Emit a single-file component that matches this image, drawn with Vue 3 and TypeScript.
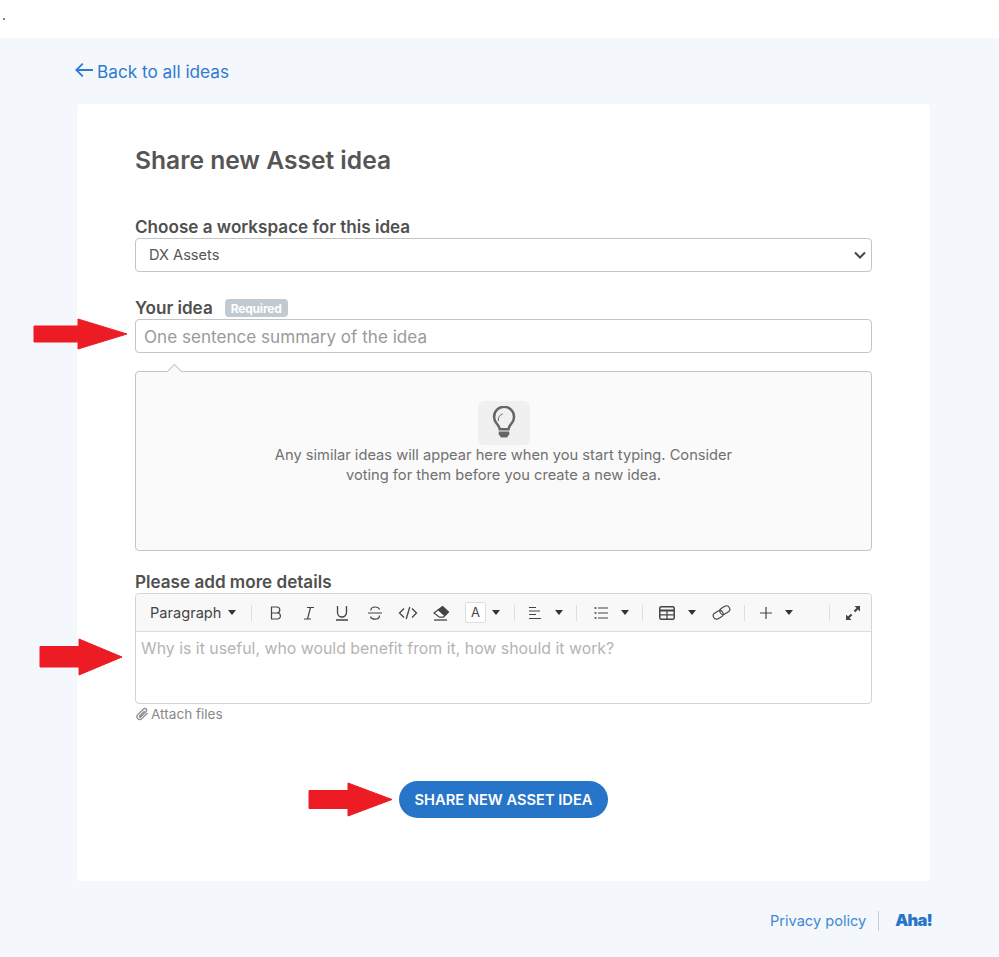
<script setup lang="ts">
const workspaces = ['DX Assets']
</script>

<template>
  <div class="page">
    <div class="topbar">.</div>
    <main class="content">
      <a class="back" href="#">
        <svg class="back-arrow" viewBox="0 0 18 14" width="18" height="14">
          <path d="M18 7H1.500M7.800 .6 1.300 7l6.500 6.400" fill="none" stroke="currentColor" stroke-width="1.800" />
        </svg>
        Back to all ideas
      </a>

      <form class="card" @submit.prevent>
        <h1>Share new Asset idea</h1>

        <label class="label first">Choose a workspace for this idea</label>
        <select class="select">
          <option v-for="w in workspaces" :key="w">{{ w }}</option>
        </select>

        <div class="label idea-label">
          Your idea
          <span class="required">Required</span>
        </div>
        <input class="idea-input" type="text" placeholder="One sentence summary of the idea" />

        <div class="similar">
          <span class="notch"></span>
          <div class="bulb">
            <svg viewBox="0 0 24 28" width="30" height="35">
              <path d="M8.600 18.500c-.3-2-1.200-3-2.400-4.400A8 8 0 1 1 18 14c-1.200 1.400-2.100 2.500-2.400 4.500z" fill="none" stroke="#666" stroke-width="2" />
              <path d="M7.500 12A5 5 0 0 1 11 6.300" fill="none" stroke="#666" stroke-width=".8" />
              <path d="M7.800 20.300h8.400v2.300l-1.800 2.600H9.600l-1.800-2.600z" fill="#666" />
            </svg>
          </div>
          <p>Any similar ideas will appear here when you start typing. Consider voting for them before you create a new idea.</p>
        </div>

        <div class="label details-label">Please add more details</div>
        <div class="editor">
          <div class="toolbar">
            <button type="button" class="tool para">Paragraph <i class="caret"></i></button>
            <span class="sep"></span>
            <button type="button" class="tool">
              <svg viewBox="0 0 16 16" width="16" height="16"><path d="M3.500 2h5.300a3 3 0 0 1 0 6H3.500zM8.800 8h.6a3 3 0 0 1 0 6H3.500V2" fill="none" stroke="#444" stroke-width="1.200" /></svg>
            </button>
            <button type="button" class="tool">
              <svg viewBox="0 0 16 16" width="16" height="16"><path d="M6 2.500h7M3 14h7M9.500 2.500 6.500 14" fill="none" stroke="#444" stroke-width="1.200" /></svg>
            </button>
            <button type="button" class="tool">
              <svg viewBox="0 0 16 16" width="16" height="16"><path d="M3.500 1v6.500a4.500 4.500 0 0 0 9 0V1M2 15h12" fill="none" stroke="#444" stroke-width="1.300" /></svg>
            </button>
            <button type="button" class="tool">
              <svg viewBox="0 0 16 16" width="16" height="16"><path d="M1 8h14M12.500 4.500C12 2.500 10 2 8 2 5.500 2 3.800 3.200 3.800 5.500M12.500 10.500c0 2.500-2 3.700-4.500 3.700-2.300 0-4-.8-4.500-2.700" fill="none" stroke="#444" stroke-width="1.200" /></svg>
            </button>
            <button type="button" class="tool">
              <svg viewBox="0 0 20 16" width="20" height="16"><path d="M6 3.500 1.500 8 6 12.500M14 3.500 18.500 8 14 12.500M11.800 2 8.200 14" fill="none" stroke="#444" stroke-width="1.300" /></svg>
            </button>
            <button type="button" class="tool">
              <svg viewBox="0 0 18 16" width="18" height="16"><path d="M10.500 1.500 16.500 7l-5 5.200H7.500L2 8z" fill="#fff" stroke="#444" stroke-width="1.200" /><path d="M10.500 1.500 16.500 7l-4 4.200L5.500 5z" fill="#444" /><path d="M2 15h13" stroke="#444" stroke-width="1.300" /></svg>
            </button>
            <span class="font-box">A</span>
            <i class="caret side"></i>
            <span class="sep s2"></span>
            <button type="button" class="tool">
              <svg viewBox="0 0 14 14" width="14" height="14"><path d="M1 1.500h7M1 5h11M1 8.500h7M1 12.500h12" stroke="#444" stroke-width="1.200" /></svg>
            </button>
            <i class="caret tight"></i>
            <span class="sep s3"></span>
            <button type="button" class="tool">
              <svg viewBox="0 0 14 14" width="14" height="14"><path d="M4 2h10M4 7h10M4 12h10" stroke="#444" stroke-width="1.100" /><path d="M.5 2h2M.5 7h2M.5 12h2" stroke="#444" stroke-width="1.500" /></svg>
            </button>
            <i class="caret tight"></i>
            <span class="sep s3"></span>
            <button type="button" class="tool table-tool">
              <svg viewBox="0 0 16 14" width="16" height="14"><rect x=".8" y=".8" width="14.400" height="12.400" rx="1.500" fill="none" stroke="#444" stroke-width="1.500" /><path d="M1 4.500h14" stroke="#444" stroke-width="2" /><path d="M1 8.800h14M8 4.500v8.700" stroke="#444" stroke-width="1.200" /></svg>
            </button>
            <i class="caret tight table-caret"></i>
            <button type="button" class="tool link">
              <svg viewBox="0 0 20 18" width="19" height="17"><g fill="none" stroke="#444" stroke-width="1.200"><rect x="1" y="8" width="11" height="7" rx="3.500" transform="rotate(-30 6.500 11.500)" /><rect x="8" y="3" width="11" height="7" rx="3.500" transform="rotate(-30 13.500 6.500)" /></g></svg>
            </button>
            <span class="sep s4"></span>
            <button type="button" class="tool">
              <svg viewBox="0 0 12 12" width="12" height="12"><path d="M6 0v12M0 6h12" stroke="#444" stroke-width="1.200" /></svg>
            </button>
            <i class="caret plus-caret"></i>
            <span class="sep s5"></span>
            <button type="button" class="tool">
              <svg viewBox="0 0 16 16" width="16" height="16"><path d="M9.500 1H15v5.500l-2-2-2.800 2.800-1.500-1.500L11.500 3zM1 15V9.500l2 2 2.800-2.800 1.500 1.500L4.500 13l2 2z" fill="#444" /></svg>
            </button>
          </div>
          <div class="editor-body">Why is it useful, who would benefit from it, how should it work?</div>
        </div>
        <a class="attach" href="#">
          <svg viewBox="0 0 14 14" width="14" height="14"><path d="M12.500 6 6.800 11.700a2.800 2.800 0 0 1-4-4L8.500 2a1.800 1.800 0 0 1 2.600 2.600L5.600 10a.7.7 0 0 1-1-1l5-5" fill="none" stroke="#888" stroke-width="1.200" /></svg>
          Attach files
        </a>

        <div class="actions">
          <button type="submit" class="submit">SHARE NEW ASSET IDEA</button>
        </div>
      </form>

      <footer class="footer">
        <a href="#">Privacy policy</a>
        <span class="footer-sep"></span>
        <span class="aha">Aha!</span>
      </footer>
    </main>

    <svg class="red-arrow" style="left:33px;top:318px" width="95" height="32" viewBox="0 0 95 32">
      <path d="M1 8h44V1l49 15-49 15v-7H1z" fill="#ed1c24" stroke="#ed1c24" stroke-linejoin="round" />
    </svg>
    <svg class="red-arrow" style="left:39px;top:638px" width="84" height="38" viewBox="0 0 84 38">
      <path d="M1 8.500h39V1l43 18-43 18v-8H1z" fill="#ed1c24" stroke="#ed1c24" stroke-linejoin="round" />
    </svg>
    <svg class="red-arrow" style="left:308px;top:782px" width="85" height="35" viewBox="0 0 85 35">
      <path d="M1 8.500h39V1l44 16.500L40 34v-7.500H1z" fill="#ed1c24" stroke="#ed1c24" stroke-linejoin="round" />
    </svg>
  </div>
</template>

<style>
html,
body {
  margin: 0;
  background: #f4f7fb;
}
</style>

<style scoped>
.page {
  position: relative;
  height: 957px;
  overflow: hidden;
  font-family: Inter, "Noto Sans", sans-serif;
  color: #555;
}

.topbar {
  height: 38px;
  background: #fff;
  padding-left: 2px;
  font-size: 14px;
  line-height: 30px;
  color: #333;
  box-sizing: border-box;
}

.content {
  padding: 0 69px 0 77px;
}

.back {
  display: flex;
  align-items: center;
  gap: 4px;
  height: 66px;
  margin-left: -2px;
  color: #2e7bd1;
  font-size: 17.2px;
  text-decoration: none;
}

.back-arrow {
  margin-top: -3px;
}

.card {
  display: flex;
  flex-direction: column;
  box-sizing: border-box;
  height: 777px;
  padding: 42px 58px 0;
  background: #fff;
  border-radius: 4px;
}

h1 {
  margin: 0;
  font-size: 24.6px;
  line-height: 28px;
  font-weight: 600;
  color: #555;
}

.label {
  font-size: 17.1px;
  line-height: 20px;
  font-weight: 600;
  color: #505050;
}

.first {
  margin-top: 43px;
  margin-bottom: 1px;
}

.select {
  height: 34px;
  padding: 0 9px 0 13px;
  border: 1px solid #c4c4c4;
  border-radius: 4px;
  appearance: none;
  background: #fff url("data:image/svg+xml,%3Csvg xmlns='http://www.w3.org/2000/svg' width='12' height='8'%3E%3Cpath d='M1 1.500 6 6.500 11 1.500' fill='none' stroke='%23444' stroke-width='2'/%3E%3C/svg%3E") no-repeat right 5px center;
  font: 14.6px Inter, sans-serif;
  color: #555;
}

.idea-label {
  display: flex;
  align-items: center;
  gap: 12px;
  margin-top: 26px;
  margin-bottom: 1px;
}

.required {
  padding: 0 6px;
  height: 18px;
  line-height: 19px;
  border-radius: 4px;
  background: #c0cad2;
  color: #fff;
  font-size: 12px;
  font-weight: 700;
  letter-spacing: -0.2px;
}

.idea-input {
  box-sizing: border-box;
  height: 34px;
  padding: 0 8px;
  border: 1px solid #c4c4c4;
  border-radius: 4px;
  font: 17.1px Inter, sans-serif;
  color: #555;
}

.idea-input::placeholder {
  color: #9a9a9a;
  opacity: 1;
}

.similar {
  position: relative;
  display: flex;
  flex-direction: column;
  align-items: center;
  box-sizing: border-box;
  height: 180px;
  margin-top: 18px;
  padding-top: 29px;
  border: 1px solid #c4c4c4;
  border-radius: 4px;
  background: #fafafa;
}

.notch {
  position: absolute;
  top: -6px;
  left: 33px;
  width: 10px;
  height: 10px;
  background: #fafafa;
  border: 1px solid #c4c4c4;
  border-right: 0;
  border-bottom: 0;
  transform: rotate(45deg);
}

.bulb {
  display: flex;
  align-items: center;
  justify-content: center;
  width: 52px;
  height: 44px;
  border-radius: 6px;
  background: #f0f0f0;
}

.similar p {
  width: 480px;
  margin: 0;
  font-size: 14.66px;
  line-height: 20px;
  color: #707070;
  text-align: center;
}

.details-label {
  margin-top: 21px;
  margin-bottom: 1px;
}

.editor {
  border: 1px solid #d4d4d4;
  border-radius: 4px;
  height: 111px;
  box-sizing: border-box;
}

.toolbar {
  display: flex;
  align-items: center;
  height: 38px;
  padding-left: 14px;
  background: #f8f8f8;
  border-bottom: 1px solid #dcdcdc;
  border-radius: 4px 4px 0 0;
  box-sizing: border-box;
}

.tool {
  display: flex;
  align-items: center;
  justify-content: center;
  width: 33px;
  height: 28px;
  padding: 0;
  flex: none;
  border: 0;
  background: none;
}

.para {
  gap: 7px;
  width: 101px;
  justify-content: flex-start;
  font: 14.6px Inter, sans-serif;
  color: #444;
}

.caret {
  display: inline-block;
  flex: none;
  width: 0;
  height: 0;
  border: 4.750px solid transparent;
  border-top: 5px solid #333;
  border-bottom: 0;
}

.side {
  margin-left: 6px;
}

.tight {
  margin-left: 4px;
}

.table-tool {
  margin-right: 1px;
}

.table-caret {
  margin-right: 9px;
}

.plus-caret {
  margin-left: 3px;
}

.sep {
  flex: none;
  width: 1px;
  height: 16px;
  margin: 0 7px 0 0;
  background: #ddd;
}

.s2 {
  margin-left: 14px;
  margin-right: 3px;
}

.s3 {
  margin-left: 13px;
  margin-right: 7px;
}

.s4 {
  margin-left: 6px;
  margin-right: 4px;
}

.s5 {
  margin-left: 36px;
  margin-right: 6px;
}

.font-box {
  flex: none;
  width: 19px;
  height: 19px;
  margin-left: 8px;
  border: 1px solid #ddd;
  border-radius: 2px;
  background: #fff;
  font-size: 13px;
  line-height: 19px;
  text-align: center;
  color: #444;
}

.editor-body {
  padding: 7px 5px;
  font-size: 15.87px;
  line-height: 20px;
  color: #b4b4b4;
}

.attach {
  display: flex;
  align-items: center;
  gap: 2px;
  margin-top: 1px;
  font-size: 13.6px;
  line-height: 18px;
  color: #888;
  text-decoration: none;
}

.actions {
  display: flex;
  justify-content: center;
  margin-top: 58px;
}

.submit {
  width: 209px;
  height: 37px;
  padding: 0;
  border: 0;
  border-radius: 19px;
  background: #2675c9;
  color: #fff;
  font: 600 14.66px Inter, sans-serif;
}

.footer {
  display: flex;
  align-items: center;
  justify-content: flex-end;
  height: 20px;
  margin-top: 30px;
  margin-right: -2px;
  font-size: 14.6px;
}

.footer a {
  color: #3f88d6;
  text-decoration: none;
}

.footer-sep {
  width: 1px;
  height: 20px;
  margin: 0 16px 0 12px;
  background: #ccc;
}

.aha {
  font-size: 16.5px;
  font-weight: 900;
  letter-spacing: -0.8px;
  color: #2675c9;
  margin-top: -3px;
}

.red-arrow {
  position: absolute;
}
</style>
